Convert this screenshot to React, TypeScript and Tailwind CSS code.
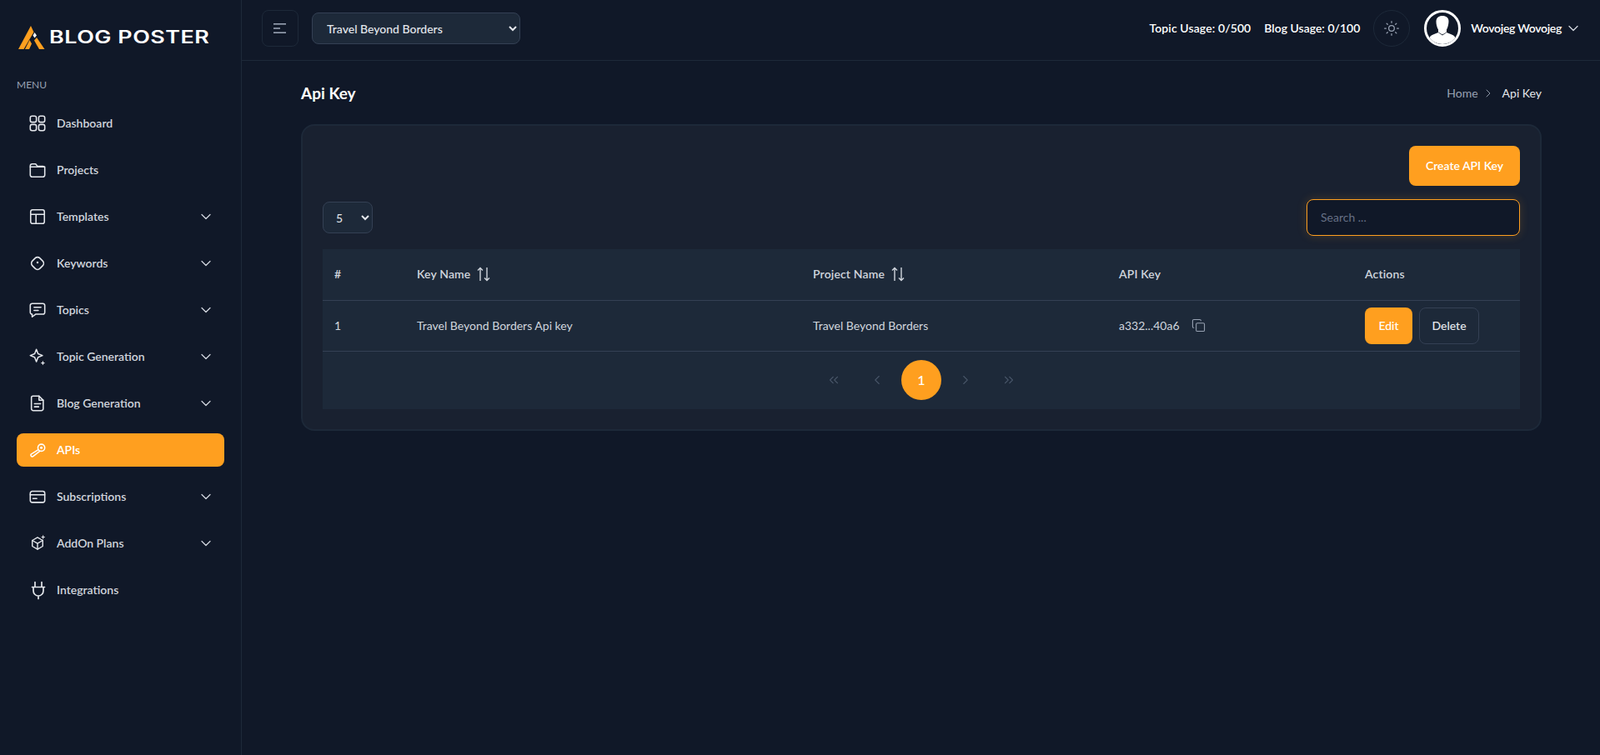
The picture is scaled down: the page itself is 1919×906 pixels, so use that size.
import React from "react";
import { ChevronDown, ChevronRight, ChevronLeft, ChevronsLeft, ChevronsRight, Sun, Copy } from "lucide-react";

const S = ({ children, size = 22 }: { children: React.ReactNode; size?: number }) => (
  <svg width={size} height={size} viewBox="0 0 24 24" fill="none" stroke="currentColor" strokeWidth="1.7" strokeLinecap="round" strokeLinejoin="round" className="shrink-0">
    {children}
  </svg>
);

const icons: Record<string, React.ReactNode> = {
  dashboard: (
    <S>
      <rect x="2.500" y="2.500" width="8" height="8" rx="2.400" />
      <rect x="13.500" y="2.500" width="8" height="8" rx="2.400" />
      <rect x="2.500" y="13.500" width="8" height="8" rx="2.400" />
      <rect x="13.500" y="13.500" width="8" height="8" rx="2.400" />
    </S>
  ),
  projects: (
    <S>
      <path d="M2.500 6.500a2.500 2.500 0 0 1 2.500-2.500h4.500l2.500 3h7a2.500 2.500 0 0 1 2.500 2.500v9a2.500 2.500 0 0 1-2.500 2.500H5a2.500 2.500 0 0 1-2.500-2.500z" />
      <path d="M2.500 8h19" />
    </S>
  ),
  templates: (
    <S>
      <rect x="3" y="3" width="18" height="18" rx="2.500" />
      <path d="M3 9h18M10 9v12" />
    </S>
  ),
  keywords: (
    <S>
      <rect x="5" y="5" width="14" height="14" rx="4.500" transform="rotate(45 12 12)" />
      <circle cx="12" cy="11" r="0.500" />
    </S>
  ),
  topics: (
    <S>
      <path d="M5 3.500h14a2.500 2.500 0 0 1 2.500 2.500v9a2.500 2.500 0 0 1-2.500 2.500H9.500L5 21v-3.500a2.500 2.500 0 0 1-2.500-2.500V6A2.500 2.500 0 0 1 5 3.500z" />
      <path d="M7.500 8.500h9M7.500 12.500h5.500" />
    </S>
  ),
  sparkle: (
    <S>
      <path d="M10.500 2.500l2.200 5.600 5.800 2.400-5.800 2.400-2.200 5.600-2.200-5.600-5.800-2.400 5.800-2.400z" />
      <path d="M19 18.500v3.500M17.200 20.200h3.600" strokeWidth="1.400" />
    </S>
  ),
  blog: (
    <S>
      <path d="M6 2.500h8l5.500 5.500v11a2.500 2.500 0 0 1-2.500 2.500H6.500A2.500 2.500 0 0 1 4 19V4.500a2 2 0 0 1 2-2z" />
      <path d="M14 2.500V8h5.500M8 12.500h8M8 16.500h5.500" />
    </S>
  ),
  key: (
    <S>
      <circle cx="17" cy="9" r="4.500" />
      <circle cx="17" cy="9" r="0.900" />
      <path d="M13 11.500L3.500 17.500a2 2 0 0 0 2.300 3L15 13.500" />
    </S>
  ),
  card: (
    <S>
      <rect x="2.500" y="5" width="19" height="14.500" rx="2.500" />
      <path d="M2.500 9.500h19M6 14.500h5" />
    </S>
  ),
  cube: (
    <span className="ml-px flex">
      <S size={20}>
        <path d="M12 3.500l7.500 4.300v8.400L12 20.500l-7.500-4.300V7.800z" />
        <path d="M4.500 7.800l7.500 4.300 7.500-4.300M12 12.100v8.400" />
        <path d="M20 1v4M18 3h4" strokeWidth="1.400" />
      </S>
    </span>
  ),
  plug: (
    <S size={24}>
      <path d="M8 2.500v6M16 2.500v6M4.500 8.500h15M6 8.500v4.500a6 6 0 0 0 12 0V8.500M12 19v3.500" />
    </S>
  ),
};

const menu: [string, string, boolean][] = [
  ["Dashboard", "dashboard", false],
  ["Projects", "projects", false],
  ["Templates", "templates", true],
  ["Keywords", "keywords", true],
  ["Topics", "topics", true],
  ["Topic Generation", "sparkle", true],
  ["Blog Generation", "blog", true],
  ["APIs", "key", false],
  ["Subscriptions", "card", true],
  ["AddOn Plans", "cube", true],
  ["Integrations", "plug", false],
];

function Logo() {
  return (
    <div className="flex items-center h-[72px] pl-[22px] pt-[17px]">
      <svg width="32" height="28" viewBox="0 0 32 28" className="shrink-0">
        <path d="M15 0L18.500 7.500 6.500 28H0z" fill="#ff9f1f" />
        <path d="M13.500 17L16 21.500 13 28H8z" fill="#ff9f1f" />
        <path d="M22 14L31.500 28H25L19 17.500z" fill="#ff9f1f" />
        <path d="M19.500 8L22 11.500 19.500 14.500 17.500 11.500z" fill="#ffffff" />
      </svg>
      <span className="ml-[5px] font-['Inter',sans-serif] font-semibold text-[21px] leading-none tracking-[0.4px] text-white whitespace-nowrap origin-left scale-x-[1.28]">BLOG POSTER</span>
    </div>
  );
}

function Sidebar() {
  return (
    <aside className="w-[290px] shrink-0 border-r border-[#1d2939] min-h-[906px] px-5">
      <div className="-mx-5"><Logo /></div>
      <div className="pt-[22px] text-xs leading-4 text-[#98a2b3] uppercase">Menu</div>
      <nav className="mt-[18px] flex flex-col gap-4">
        {menu.map(([label, icon, chev]) => {
          const active = label === "APIs";
          return (
            <div
              key={label}
              className={`flex items-center h-10 pl-[14px] pr-[12px] rounded-lg text-sm font-semibold ${active ? "bg-[#ff9f1f] text-white" : "text-[#d0d5dd]"}`}
            >
              <span className={`w-[34px] flex ${active ? "text-white" : "text-[#e4e7ec]"}`}>{icons[icon]}</span>
              <span className="flex-1">{label}</span>
              {chev && <ChevronDown size={20} strokeWidth={1.5} className="text-[#d0d5dd]" />}
            </div>
          );
        })}
      </nav>
    </aside>
  );
}

function Header() {
  return (
    <header className="h-[73px] border-b border-[#1d2939] flex items-start pt-3 pl-6 pr-[22px]">
      <button className="w-11 h-11 rounded-lg border border-[#1d2939] flex items-center justify-center text-[#98a2b3]">
        <svg width="16" height="12" viewBox="0 0 16 12" fill="currentColor">
          <rect width="15" height="1.600" />
          <rect y="5.200" width="8" height="1.600" />
          <rect y="10.400" width="15" height="1.600" />
        </svg>
      </button>
      <select className="ml-4 mt-[3px] w-[250px] h-[38px] rounded-lg bg-[#1d2939] border border-[#344054] text-sm text-[#e4e7ec] pl-[13px] [color-scheme:dark] font-medium">
        <option>Travel Beyond Borders</option>
      </select>
      <div className="flex-1" />
      <span className="leading-11 text-sm font-semibold text-white tracking-[0.1px]">Topic Usage: 0/500</span>
      <span className="leading-11 ml-4 text-sm font-semibold text-white">Blog Usage: 0/100</span>
      <button className="ml-4 w-11 h-11 rounded-full border border-[#1d2939] flex items-center justify-center text-[#98a2b3]">
        <Sun size={20} strokeWidth={1.5} />
      </button>
      <div className="ml-[17px] w-11 h-11 rounded-full border-[3px] border-white overflow-hidden bg-[#101828]">
        <svg viewBox="0 0 38 38" width="38" height="38" fill="#ffffff">
          <path d="M11.500 11c0-4.500 3-7 7.500-7s7.800 2.500 7.500 7c-.2 3-1 7-2.500 9.500v3l-5 3-5-3v-3c-1.500-2.500-2.500-6.500-2.500-9.500z" />
          <path d="M2 38c0-7 2-10.500 7-12l5-2 5 3.500 5-3.500 5 2c5 1.500 7 5 7 12z" />
        </svg>
      </div>
      <span className="leading-11 ml-3 text-sm font-semibold text-white tracking-[-0.3px]">Wovojeg Wovojeg</span>
      <ChevronDown size={20} strokeWidth={1.5} className="ml-1 mt-3 text-[#d0d5dd]" />
    </header>
  );
}

function SortIcon() {
  return (
    <svg width="16" height="18" viewBox="0 0 16 18" fill="none" stroke="#d0d5dd" strokeWidth="1.400" className="ml-2 shrink-0">
      <path d="M4 17V1.500M1 4.500l3-3 3 3M12 1v15.500M9 13.500l3 3 3-3" />
    </svg>
  );
}

function ApiTable() {
  return (
    <div className="mt-4 bg-[#1d2939]">
      <table className="w-full table-fixed text-sm">
        <colgroup>
          <col className="w-[99px]" />
          <col className="w-[475px]" />
          <col className="w-[367px]" />
          <col className="w-[295px]" />
          <col />
        </colgroup>
        <thead>
          <tr className="h-[61px] border-b border-[#344054] text-left text-[#d0d5dd] tracking-[0.15px]">
            <th className="pl-[14px] font-semibold">#</th>
            <th className="pl-[14px] font-semibold"><span className="flex items-center">Key Name<SortIcon /></span></th>
            <th className="pl-[14px] font-semibold"><span className="flex items-center">Project Name<SortIcon /></span></th>
            <th className="pl-[14px] font-semibold">API Key</th>
            <th className="pl-[14px] font-semibold">Actions</th>
          </tr>
        </thead>
        <tbody>
          <tr className="h-[61px] border-b border-[#344054] text-[#d0d5dd]">
            <td className="pl-[14px]">1</td>
            <td className="pl-[14px]">Travel Beyond Borders Api key</td>
            <td className="pl-[14px]">Travel Beyond Borders</td>
            <td className="pl-[14px]">
              <span className="flex items-center gap-[14px]">a332...40a6<Copy size={17} strokeWidth={1.5} className="text-[#98a2b3]" /></span>
            </td>
            <td className="pl-[14px]">
              <div className="flex gap-2">
                <button className="h-11 w-[57px] rounded-lg bg-[#ff9f1f] text-white font-medium">Edit</button>
                <button className="h-11 w-[72px] rounded-lg border border-[#344054] text-[#e4e7ec] font-medium">Delete</button>
              </div>
            </td>
          </tr>
        </tbody>
      </table>
      <div className="h-[69px] flex items-center justify-center text-[#475467]">
        <ChevronsLeft size={18} strokeWidth={1.5} className="mr-[34px]" />
        <ChevronLeft size={18} strokeWidth={1.5} />
        <span className="mx-5 w-12 h-12 rounded-full bg-[#ff9f1f] text-white flex items-center justify-center text-base font-medium">1</span>
        <ChevronRight size={18} strokeWidth={1.5} />
        <ChevronsRight size={18} strokeWidth={1.5} className="ml-[34px]" />
      </div>
    </div>
  );
}

export default function App() {
  return (
    <div className="flex min-h-[906px] bg-[#101828] font-['Lato','Noto_Sans',sans-serif]">
      <Sidebar />
      <main className="flex-1 min-w-0">
        <Header />
        <div className="pl-[71px] pr-[70px]">
          <div className="h-[76px] flex items-center justify-between pt-[2px]">
            <h1 className="text-[19px] font-bold text-white">Api Key</h1>
            <div className="flex items-center text-sm">
              <span className="text-[#98a2b3]">Home</span>
              <ChevronRight size={16} strokeWidth={1.400} className="ml-1 mr-[9px] text-[#98a2b3]" />
              <span className="text-[#e4e7ec]">Api Key</span>
            </div>
          </div>
          <section className="rounded-2xl border-2 border-[#1d2939] bg-[#192130] px-[24px] py-[24px] h-[368px]">
            <div className="flex justify-end">
              <button className="h-12 w-[133px] rounded-lg bg-[#ff9f1f] text-white text-sm font-semibold">Create API Key</button>
            </div>
            <div className="mt-4 flex items-center justify-between">
              <select className="w-[60px] h-[38px] rounded-lg bg-[#1d2939] border border-[#344054] text-sm text-[#e4e7ec] pl-[11px] [color-scheme:dark]">
                <option>5</option>
              </select>
              <input
                placeholder="Search ..."
                className="w-[256px] h-11 rounded-lg border border-[#ff9f1f] bg-[#101828] px-4 pb-px text-sm text-white placeholder:text-[#667085] shadow-[0_0_12px_rgba(255,159,31,0.18)] outline-none"
              />
            </div>
            <ApiTable />
          </section>
        </div>
      </main>
    </div>
  );
}
